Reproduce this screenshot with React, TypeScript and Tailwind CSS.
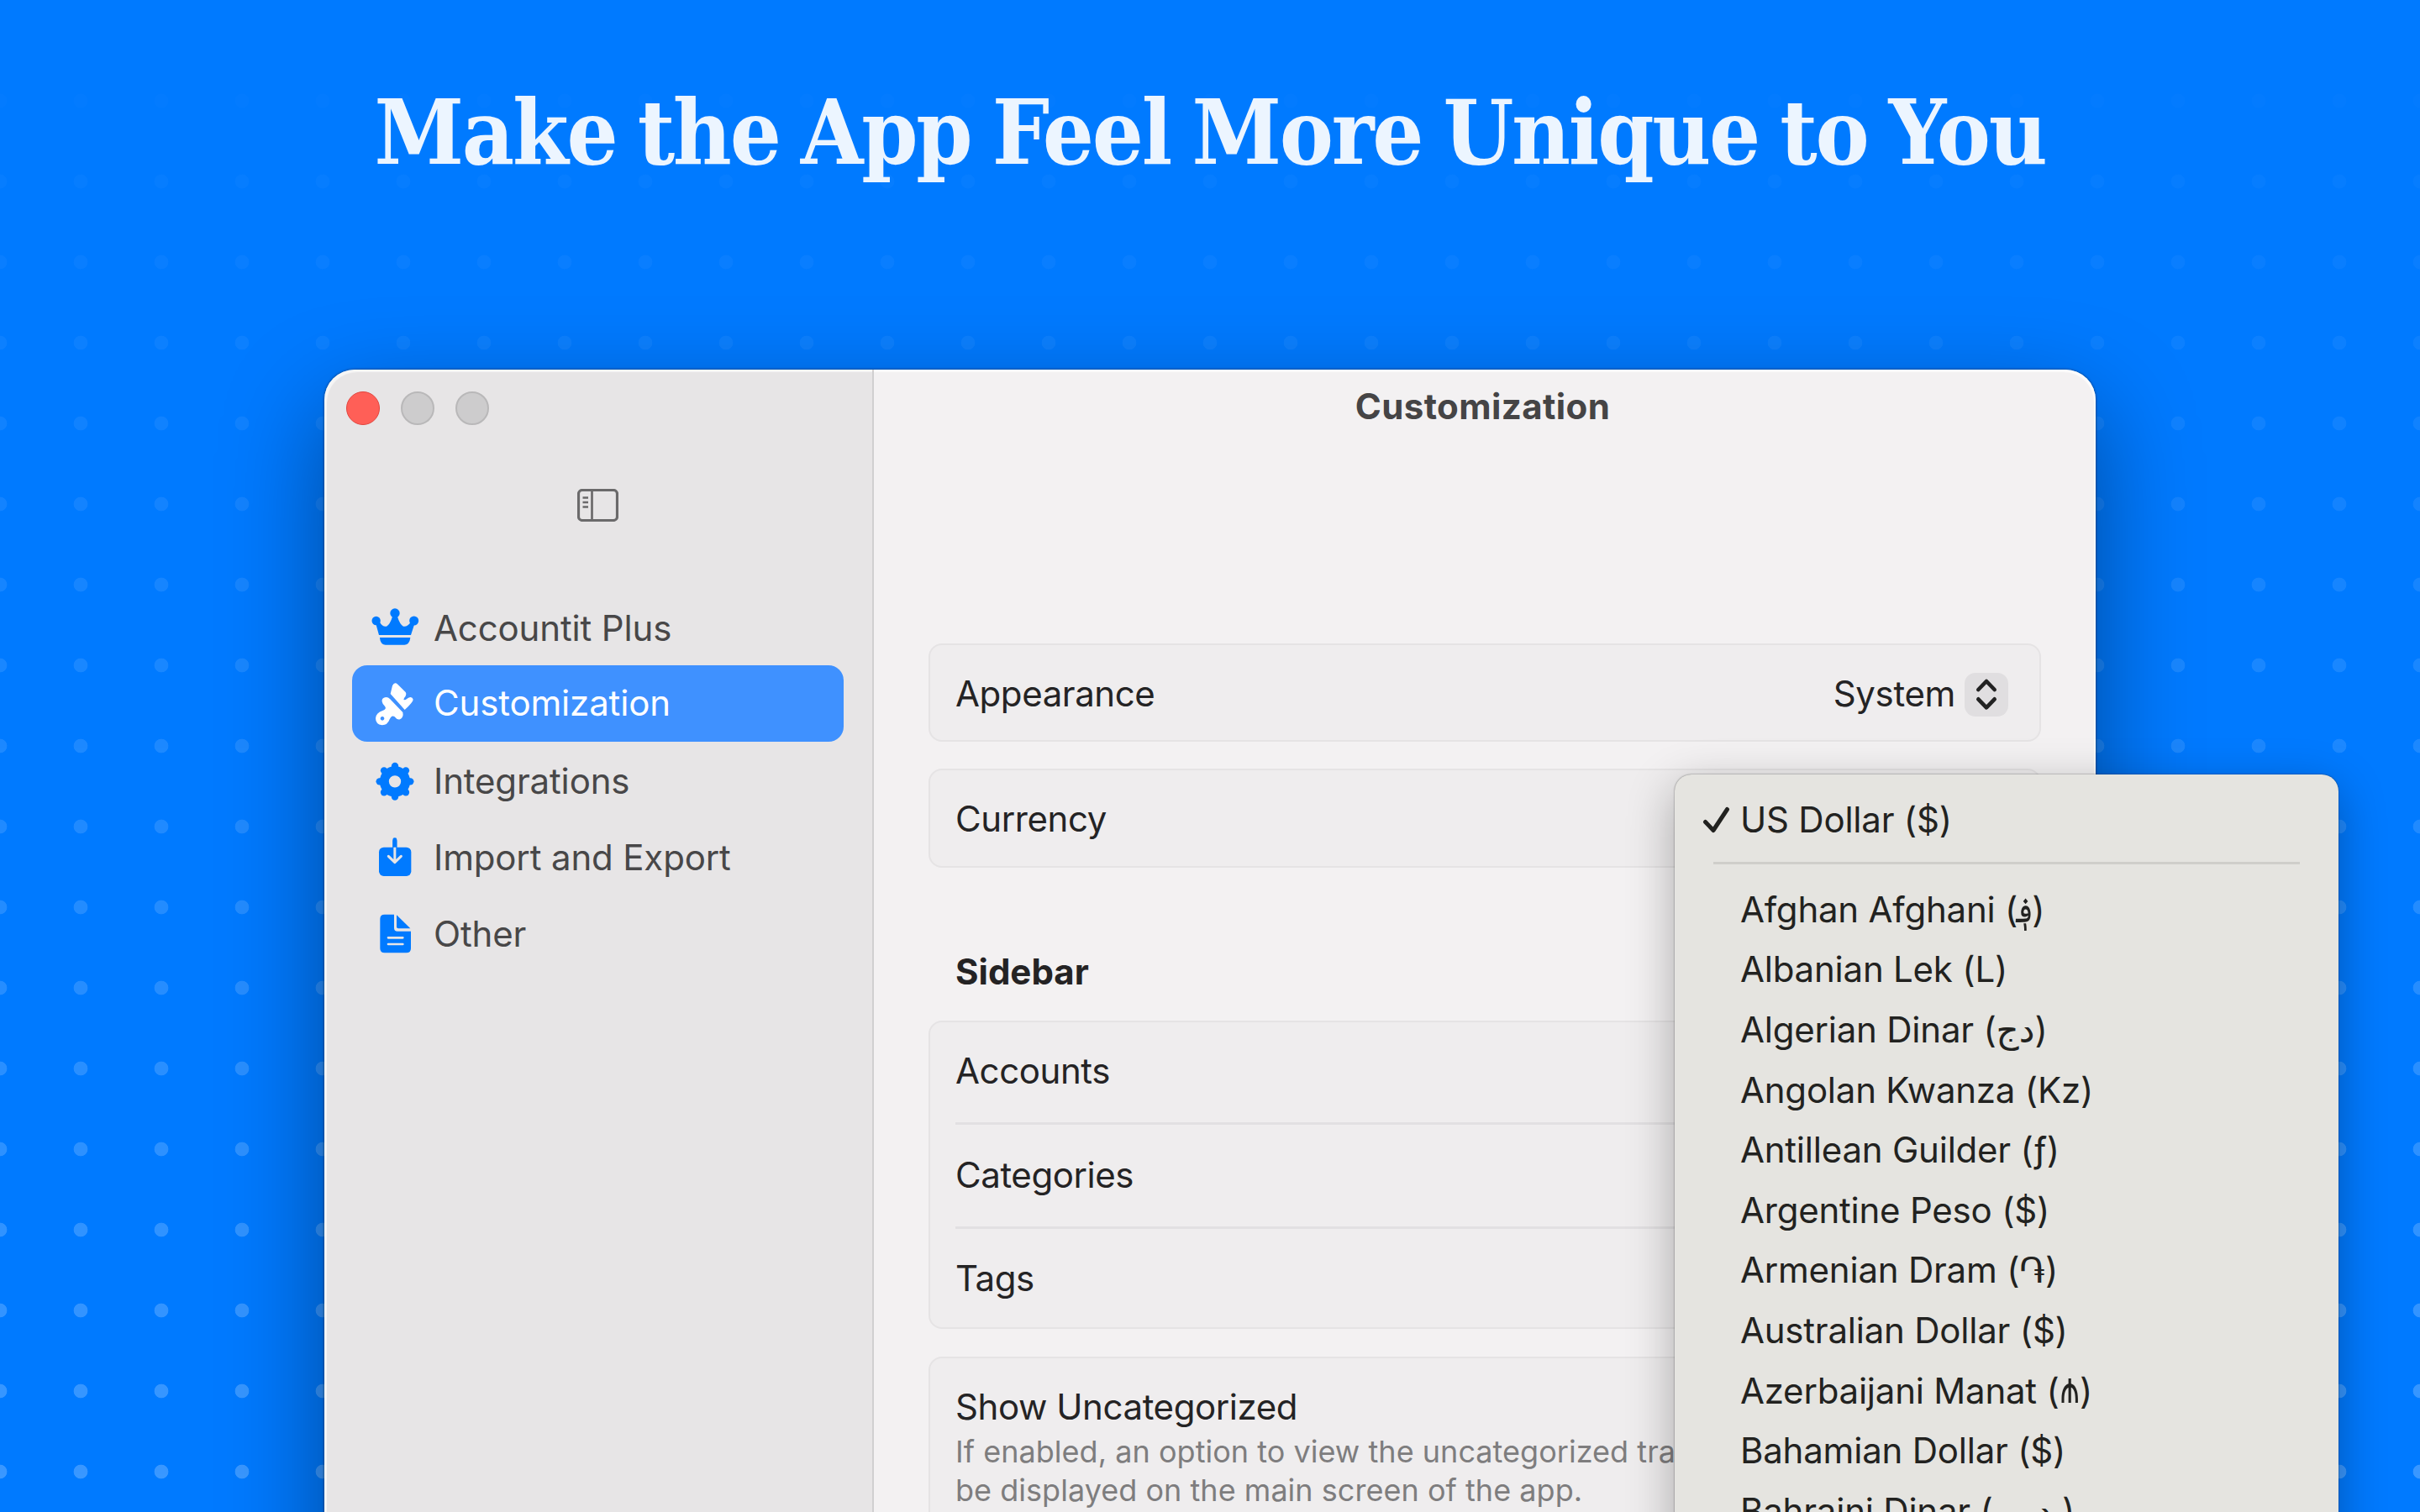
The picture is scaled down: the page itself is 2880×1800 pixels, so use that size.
import type { ReactNode } from 'react';

const CrownIcon = () => (
  <svg viewBox="36 27 168 168" className="size-14 overflow-visible" fill="currentColor">
    <circle cx="53" cy="87" r="15.5" />
    <circle cx="120" cy="60" r="17" />
    <circle cx="188" cy="87" r="16.5" />
    <path d="M63 138 L52 98 L66 92 Q76 110 90 107 Q102 102 112 70 L128 70 Q138 102 150 107 Q164 110 176 92 L190 98 L177 138Z" />
    <path d="M66 147 H175 Q172 173 154 173 H86 Q68 173 66 147Z" />
  </svg>
);

const BrushIcon = () => (
  <svg viewBox="36 298 168 168" className="size-14 overflow-visible" fill="currentColor">
    <path d="M104 346 L111 317 Q118 302 130 312 L158 340 Q163 347 158 354 Q148 366 153 368 Q158 368 168 360 Q182 354 185 366 Q186 374 155 403Z" />
    <path
      fillRule="evenodd"
      d="M74 374 Q72 362 84 359 Q94 356 102 364 L148 412 Q152 430 138 437 Q128 440 118 427 Q108 421 101 437 Q94 458 74 458 Q51 455 51 433 Q53 413 76 406 Q92 400 84 390 Q75 382 74 374Z M75 427 a7 7 0 1 0 0.1 0Z"
    />
  </svg>
);

const GearIcon = () => (
  <svg viewBox="36 575 168 168" className="size-14 overflow-visible" fill="none" stroke="currentColor">
    <circle cx="120" cy="657" r="38" strokeWidth="33" />
    {[0, 45, 90, 135, 180, 225, 270, 315].map((angle) => (
      <path key={angle} d="M120 608 V602" strokeWidth="25" strokeLinecap="round" transform={`rotate(${angle} 120 657)`} />
    ))}
  </svg>
);

const ImportIcon = () => (
  <svg viewBox="36 851 168 168" className="size-14 overflow-visible" fill="currentColor">
    <rect x="63" y="895" width="115" height="103" rx="17" />
    <rect x="112" y="861" width="15" height="40" rx="7" />
    <path d="M119.500 895 V948 M97 927 L119.500 949 L142 927" fill="none" stroke="#e6e5e6" strokeWidth="9" strokeLinecap="round" strokeLinejoin="round" />
    <rect x="112" y="870" width="15" height="25" />
  </svg>
);

const FileIcon = () => (
  <svg viewBox="36 1123 168 168" className="size-14 overflow-visible" fill="currentColor">
    <path d="M83 1134 H117 V1182 Q117 1194 129 1194 H177 V1255 Q177 1271 161 1271 H83 Q67 1271 67 1255 V1150 Q67 1134 83 1134Z" />
    <path d="M126 1136 L175 1184 H132 Q126 1184 126 1178Z" />
    <path d="M96 1217 H148 M96 1240 H148" stroke="#e6e5e6" strokeWidth="8" strokeLinecap="round" />
  </svg>
);

const NAV: { label: string; icon: ReactNode; row: string; text: string }[] = [
  { label: 'Accountit Plus', icon: <CrownIcon />, row: 'text-[#484748]', text: 'mt-[2px]' },
  { label: 'Customization', icon: <BrushIcon />, row: 'bg-[#3f91ff] text-white mb-[2px]', text: '-mt-[2px]' },
  { label: 'Integrations', icon: <GearIcon />, row: 'text-[#484748]', text: '-mt-[2px]' },
  { label: 'Import and Export', icon: <ImportIcon />, row: 'text-[#484748]', text: '-mt-[2px]' },
  { label: 'Other', icon: <FileIcon />, row: 'text-[#484748]', text: '-mt-[2px]' },
];

const CURRENCIES = [
  ['Afghan Afghani', '؋'],
  ['Albanian Lek', 'L'],
  ['Algerian Dinar', 'دج'],
  ['Angolan Kwanza', 'Kz'],
  ['Antillean Guilder', 'ƒ'],
  ['Argentine Peso', '$'],
  ['Armenian Dram', '֏'],
  ['Australian Dollar', '$'],
  ['Azerbaijani Manat', '₼'],
  ['Bahamian Dollar', '$'],
  ['Bahraini Dinar', '.د.ب'],
];

// The fallback font draws these signs wider than the Latin text around them.
const SYMBOL_STYLE: Record<string, string> = {
  '؋': 'inline-block -mx-[4px] scale-x-85',
  '₼': 'inline-block -mx-[3px] scale-x-80 scale-y-125 origin-bottom',
};

const Card = ({ className, children }: { className: string; children: ReactNode }) => (
  <section className={`rounded-[16px] border-2 border-[#e5e3e4] bg-[#efedee] px-[30px] ${className}`}>{children}</section>
);

function Sidebar() {
  return (
    <aside className="h-full w-[654px] shrink-0 rounded-tl-[36px] border-r-2 border-[#d0cfd0] bg-[#e7e5e6] shadow-[inset_3px_3px_1px_rgba(255,255,255,0.6)]">
      <div className="flex gap-[25px] pt-[26px] pl-[25.500px]">
        <span className="size-10 rounded-full border border-[#e2463f] bg-[#ff5f57]" />
        <span className="size-10 rounded-full border-2 border-[#b9b8b9] bg-[#cdcccd]" />
        <span className="size-10 rounded-full border-2 border-[#b9b8b9] bg-[#cdcccd]" />
      </div>
      <svg viewBox="0 0 49 39" className="mt-[76px] ml-[301px] h-[39px] w-[49px]" fill="none" stroke="#6b6a6b" strokeWidth="3.2">
        <rect x="1.500" y="1.500" width="46" height="36" rx="4.500" />
        <path d="M17.500 2 V37" strokeWidth="2.700" />
        <path d="M6.500 10.500 H13 M6.500 16 H13 M6.500 21.500 H13" strokeWidth="2.400" />
      </svg>
      <nav className="mt-[80px] ml-[33px] w-[585px] tracking-[-0.15px]">
        {NAV.map((item) => (
          <div key={item.label} className={`flex h-[91px] items-center rounded-[18px] pl-[23px] ${item.row}`}>
            <span className={item.label === 'Customization' ? 'text-white' : 'text-[#007aff]'}>{item.icon}</span>
            <span className={`ml-[18px] text-[42px] leading-none whitespace-nowrap ${item.text}`}>{item.label}</span>
          </div>
        ))}
      </nav>
    </aside>
  );
}

function Settings() {
  return (
    <main className="h-full grow rounded-tr-[36px] bg-[#f3f1f2] px-[65px] text-[42px] tracking-[-0.42px] text-[#242324] shadow-[inset_-2px_3px_1px_rgba(255,255,255,0.7)]">
      <h2 className="h-[326px] pt-[17px] pr-[5px] text-center text-[42px] leading-[54px] font-bold tracking-[0.4px] text-[#454445]">Customization</h2>
      <Card className="flex h-[117px] items-center justify-between pt-[2px] pr-[37px]!">
        <span>Appearance</span>
        <span className="flex items-center gap-[11px] tracking-[-0.35px]">
          System
          <span className="mt-[2px] size-[52px] rounded-[13px] bg-[#e0dee0]">
            <svg viewBox="0 0 156 156" fill="none" stroke="#222" strokeWidth="14" strokeLinecap="round" strokeLinejoin="round">
              <path d="M49 60 L78 30 L107 60 M49 94 L78 124 L107 94" />
            </svg>
          </span>
        </span>
      </Card>
      <Card className="mt-8 flex h-[118px] items-center pt-[1px]">Currency</Card>
      <h3 className="mt-[94px] h-[88px] pl-[32px] leading-[60px] font-bold tracking-normal">Sidebar</h3>
      <Card className="h-[367px]">
        <div className="flex h-[122px] items-center border-b-[3px] border-[#e2e0e2] pb-[4px]">Accounts</div>
        <div className="flex h-[124px] items-center border-b-[3px] border-[#e2e0e2] pb-[3px]">Categories</div>
        <div className="flex h-[118px] items-center pb-[1px]">Tags</div>
      </Card>
      <Card className="mt-[33px] h-[300px] pt-[28px]">
        <div className="leading-[60px]">Show Uncategorized</div>
        <p className="text-[36px] leading-[46px] tracking-[0.03px] whitespace-nowrap text-[#7e7d7e]">
          If enabled, an option to view the uncategorized transactions will
          <br />
          be displayed on the main screen of the app.
        </p>
      </Card>
    </main>
  );
}

function CurrencyMenu() {
  return (
    <div className="absolute top-[482px] left-[1607px] h-[1200px] w-[790px] rounded-[20px] bg-[#e5e4e0] pt-[18px] text-[42px] tracking-[-0.22px] text-[#222220] shadow-[0_0_2px_rgba(0,0,0,0.55),0_16px_56px_rgba(0,0,0,0.3)]">
      <div className="flex h-[72px] items-center pl-[34px] leading-none">
        <svg viewBox="0 0 31 30" className="h-[30px] w-[31px] overflow-visible" fill="none" stroke="#222220" strokeWidth="5" strokeLinecap="round" strokeLinejoin="round">
          <path d="M2.500 17.500 L12 27.500 L28.500 2.500" />
        </svg>
        <span className="ml-[13px]">US Dollar ($)</span>
      </div>
      <div className="mx-[46px] mt-[14px] mb-[18px] h-[3px] bg-[#cfceca]" />
      <div>
        {CURRENCIES.map(([name, symbol]) => (
          <div key={name} className="flex h-[71.600px] items-center pl-[78px] leading-none whitespace-pre">
            {name} (<bdi className={SYMBOL_STYLE[symbol] ?? ''}>{symbol}</bdi>)
          </div>
        ))}
      </div>
    </div>
  );
}

export default function App() {
  return (
    <div className="relative h-[1800px] w-[2880px] overflow-hidden bg-[#007aff] font-['Inter','DejaVu_Sans',sans-serif]">
      <div className="absolute inset-0 bg-[radial-gradient(circle,rgba(255,255,255,0.23)_8px,transparent_8.700px)] mask-[linear-gradient(to_bottom,transparent_2%,black)] bg-[length:96px_96px] bg-[position:-48px_-24px]" />
      <header className="relative flex h-[440px] justify-center pt-[96px]">
        <h1 className="font-['DejaVu_Serif',serif] text-[107px] leading-[124px] font-bold font-stretch-condensed tracking-[-2.25px] [word-spacing:-6px] whitespace-nowrap text-[#ecf5ff]">
          Make the App Feel More Unique to You
        </h1>
      </header>
      <div className="relative ml-[386px] flex h-[1560px] w-[2108px] rounded-[36px] shadow-[0_0_3px_rgba(0,0,0,0.6),0_44px_120px_rgba(0,0,0,0.4)]">
        <Sidebar />
        <Settings />
        <CurrencyMenu />
      </div>
    </div>
  );
}
